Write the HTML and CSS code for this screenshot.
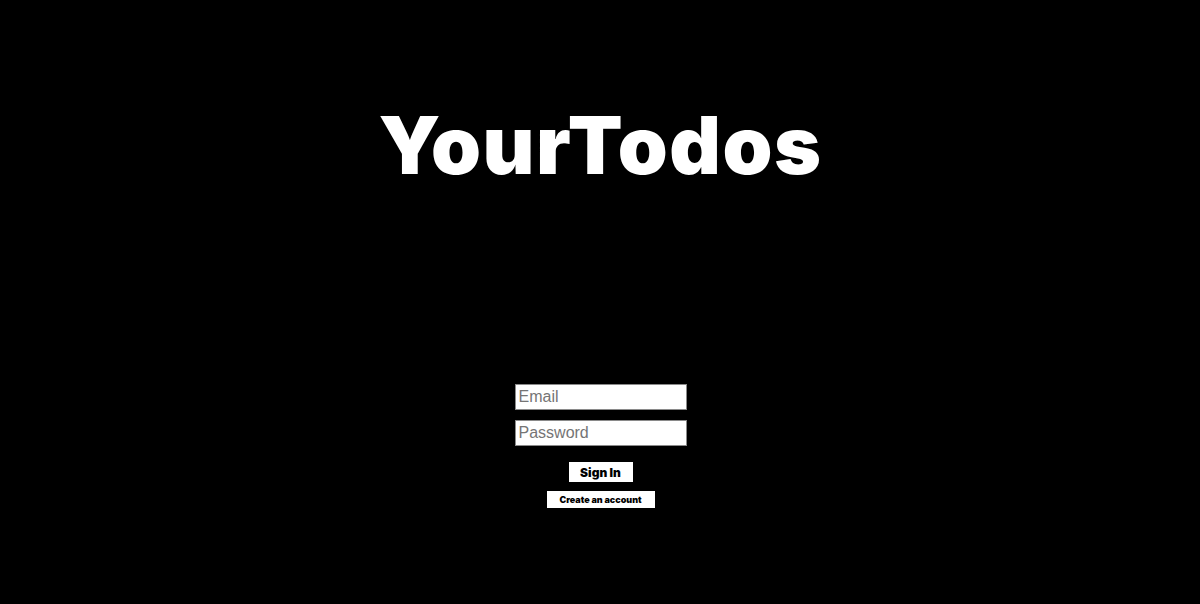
FILE: index.html
```html
<!DOCTYPE html>
<html>
<head>
<meta charset="utf-8">
<link rel="stylesheet" href="styles.css">
</head>
<body>
<div class="page">
  <h1 class="title">YourTodos</h1>
  <form class="login">
    <input class="field" type="email" placeholder="Email">
    <input class="field" type="password" placeholder="Password">
    <button class="btn btn-signin" type="button">Sign In</button>
    <button class="btn btn-create" type="button">Create an account</button>
  </form>
</div>
</body>
</html>
```
FILE: styles.css
```css
html, body {
  margin: 0;
  padding: 0;
  background: #000;
  height: 100%;
}
.page {
  display: flex;
  flex-direction: column;
  align-items: center;
  padding-top: 95px;
  padding-left: 1px;
}
.title {
  margin: 0;
  color: #fff;
  font-family: Inter, "Noto Sans", sans-serif;
  font-weight: 900;
  font-size: 80px;
  line-height: 100px;
  letter-spacing: 1.5px;
}
.login {
  margin-top: 189px;
  display: flex;
  flex-direction: column;
  align-items: center;
}
.field {
  box-sizing: border-box;
  width: 172px;
  height: 26px;
  margin: 0 0 10px 0;
  padding: 1px 3px;
  border: 1px solid #8a8a8a;
  background: #fff;
  font-family: "Liberation Sans", Arial, sans-serif;
  font-size: 16px;
  color: #000;
  outline: none;
}
.field::placeholder {
  color: #757575;
}
.btn {
  box-sizing: border-box;
  background: #fff;
  color: #000;
  border: none;
  font-family: Inter, "Noto Sans", sans-serif;
  font-weight: 900;
  padding: 0;
}
.btn-signin {
  margin-top: 6px;
  width: 64px;
  height: 20px;
  font-size: 12px;
}
.btn-create {
  margin-top: 9px;
  width: 108px;
  height: 17px;
  font-size: 9px;
}
```
